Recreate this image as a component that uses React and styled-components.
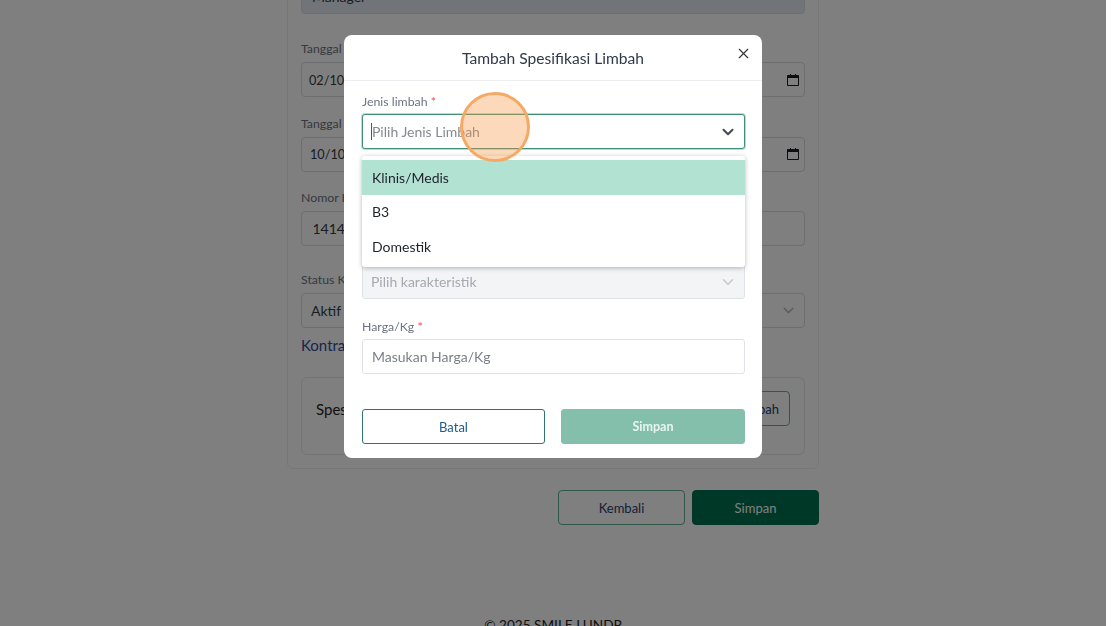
import styled, { createGlobalStyle } from "styled-components";
import { ChevronDown, X } from "lucide-react";

const GlobalStyle = createGlobalStyle`
  html, body {
    margin: 0;
    height: 626px;
    overflow: hidden;
    background: #ffffff;
    font-family: "Lato", "Liberation Sans", sans-serif;
  }
  * { box-sizing: border-box; }
`;

const Page = styled.div`
  height: 626px;
  overflow: hidden;
  display: flex;
  flex-direction: column;
  align-items: center;
  padding-right: 14px;
`;

const Panel = styled.div`
  width: 532px;
  margin-top: -22px;
  padding: 0 13px 13px;
  border: 1px solid #eceef1;
  border-radius: 6px;
  display: flex;
  flex-direction: column;
`;

const PageField = styled.div`
  display: flex;
  flex-direction: column;
  gap: 5px;
  margin-bottom: ${(p) => p.$mb}px;
`;

const PageLabel = styled.div`
  font-size: 12.3px;
  line-height: 16px;
  color: #6b7280;
`;

const PageInput = styled.div`
  height: 35px;
  border: 1px solid #d9dce1;
  border-radius: 4px;
  background: ${(p) => p.$bg || "#fff"};
  padding: 0 ${(p) => p.$pr || 10}px 0 ${(p) => p.$pl || 10}px;
  display: flex;
  align-items: center;
  justify-content: space-between;
  font-size: ${(p) => p.$fs || 14}px;
  color: #333a45;
`;

const ContractLink = styled.div`
  font-size: 15px;
  line-height: 18px;
  color: #2d4a9c;
  margin-bottom: 23px;
`;

const SpecCard = styled.div`
  height: 78px;
  border: 1px solid #e4e6ea;
  border-radius: 6px;
  padding: 13px 14px 0;
`;

const SpecRow = styled.div`
  display: flex;
  align-items: center;
  justify-content: space-between;
  font-size: 15px;
  color: #222;
`;

const AddButton = styled.div`
  height: 35px;
  padding: 0 10px;
  border: 1px solid #5faf94;
  border-radius: 4px;
  display: flex;
  align-items: center;
  font-size: 13px;
  color: #1e3a6e;
`;

const PageActions = styled.div`
  width: 532px;
  margin-top: 21px;
  display: flex;
  justify-content: flex-end;
  gap: 7px;
`;

const ActionButton = styled.div`
  width: 127px;
  height: 35px;
  border-radius: 4px;
  border: 1px solid ${(p) => (p.$solid ? "#00704e" : "#5faf94")};
  background: ${(p) => (p.$solid ? "#00704e" : "transparent")};
  color: ${(p) => (p.$solid ? "#ffffff" : "#1e3f70")};
  font-size: 13px;
  display: flex;
  align-items: center;
  justify-content: center;
`;

const Footer = styled.div`
  margin-top: auto;
  height: 9px;
  overflow: hidden;
  font-size: 13.6px;
  line-height: 17px;
  color: #222;
`;

const Overlay = styled.div`
  position: fixed;
  top: 0;
  bottom: 0;
  left: 0;
  right: 14px;
  background: rgba(0, 0, 0, 0.5);
`;

const Modal = styled.div`
  position: fixed;
  left: 344px;
  top: 35px;
  width: 418px;
  background: #fff;
  border-radius: 8px;
`;

const ModalHeader = styled.div`
  height: 46px;
  border-bottom: 1px solid #eceef1;
  display: flex;
  align-items: center;
  justify-content: center;
  position: relative;
  font-size: 15.6px;
  color: #2f3a4a;
`;

const CloseButton = styled.div`
  position: absolute;
  top: 10px;
  right: 10px;
  display: flex;
  color: #333;
`;

const ModalBody = styled.div`
  padding: 13px 17px 14px 18px;
  position: relative;
  display: flex;
  flex-direction: column;
`;

const Field = styled.div`
  display: flex;
  flex-direction: column;
  gap: 4px;
  margin-bottom: ${(p) => p.$mb}px;
`;

const Label = styled.div`
  font-size: 12.3px;
  line-height: 16px;
  color: #6b7280;
`;

const Required = styled.span`
  color: #ef4444;
`;

const Select = styled.div`
  height: 35px;
  padding: 0 7px 0 8px;
  border-radius: 3px;
  border: 1px solid ${(p) => (p.$focused ? "#3f8f75" : "#dfe3e8")};
  box-shadow: ${(p) => (p.$focused ? "0 0 0 1px #b9dccf" : "none")};
  background: ${(p) => (p.$disabled ? "#f3f4f6" : "#fff")};
  color: ${(p) => (p.$disabled ? "#a4a9b2" : "#85898f")};
  font-size: 14px;
  display: flex;
  align-items: center;
  justify-content: space-between;
`;

const Caret = styled.span`
  width: 1px;
  height: 17px;
  background: #555;
`;

const SelectText = styled.span`
  display: flex;
  align-items: center;
`;

const ArrowIcon = styled.span`
  display: flex;
  color: ${(p) => (p.$disabled ? "#c4c8ce" : "#444c58")};
`;

const TextInput = styled.div`
  height: 35px;
  padding: 0 9px;
  border: 1px solid #dfe3e8;
  border-radius: 3px;
  color: #7b8088;
  font-size: 14px;
  display: flex;
  align-items: center;
`;

const Menu = styled.div`
  position: absolute;
  left: 18px;
  right: 17px;
  top: 75px;
  height: 111px;
  padding-top: 4px;
  background: #fff;
  border-radius: 3px;
  box-shadow: 0 1px 5px rgba(0, 0, 0, 0.28);
  z-index: 2;
`;

const MenuItem = styled.div`
  height: 34.5px;
  padding: 0 10px;
  display: flex;
  align-items: center;
  background: ${(p) => (p.$active ? "#b2e2d2" : "transparent")};
  color: #1f2328;
  font-size: 14px;
`;

const ModalActions = styled.div`
  display: grid;
  grid-template-columns: 183px 184px;
  justify-content: space-between;
`;

const ModalButton = styled.div`
  height: 35px;
  border-radius: 3px;
  border: 1px solid ${(p) => (p.$solid ? "#83bfab" : "#2f7470")};
  background: ${(p) => (p.$solid ? "#83bfab" : "#fff")};
  color: ${(p) => (p.$solid ? "#e8f5f0" : "#1f5a8a")};
  font-size: ${(p) => (p.$solid ? 12.5 : 13)}px;
  font-weight: ${(p) => (p.$solid ? 700 : 400)};
  display: flex;
  align-items: center;
  justify-content: center;
`;

const ClickMarker = styled.div`
  position: fixed;
  left: 460px;
  top: 92px;
  width: 70px;
  height: 70px;
  border-radius: 50%;
  border: 3px solid #f5a964;
  background: rgba(250, 150, 70, 0.36);
  z-index: 3;
`;

// native date input picker glyph
const CalendarGlyph = () => (
  <svg width="12" height="12" viewBox="0 0 12 12">
    <path d="M0.5 1.5h11v10h-11z" fill="none" stroke="#1a1d22" />
    <path d="M0.5 1.5h11v2.5h-11z" fill="#1a1d22" />
    <path d="M3 0h1v2H3zM8 0h1v2H8z" fill="#1a1d22" />
  </svg>
);

const App = () => {
  return (
    <>
      <GlobalStyle />
      <Page>
        <Panel>
          <PageField $mb={27}>
            <PageInput $bg="#e2e8f0">Manager</PageInput>
          </PageField>
          <PageField $mb={18.5}>
            <PageLabel>Tanggal Mulai</PageLabel>
            <PageInput $pl={7} $pr={5} $fs={12.7}>
              02/10/2025
              <CalendarGlyph />
            </PageInput>
          </PageField>
          <PageField $mb={18.5}>
            <PageLabel>Tanggal Selesai</PageLabel>
            <PageInput $pl={8} $pr={5} $fs={12.7}>
              10/10/2025
              <CalendarGlyph />
            </PageInput>
          </PageField>
          <PageField $mb={26}>
            <PageLabel>Nomor Kontrak</PageLabel>
            <PageInput $pl={10.5}>1414</PageInput>
          </PageField>
          <PageField $mb={8}>
            <PageLabel>Status Kontrak</PageLabel>
            <PageInput $pl={9} $pr={7.5}>
              Aktif
              <ChevronDown size={17} color="#b8bcc2" />
            </PageInput>
          </PageField>
          <ContractLink>Kontrak.pdf</ContractLink>
          <SpecCard>
            <SpecRow>
              Spesifikasi Limbah
              <AddButton>Tambah</AddButton>
            </SpecRow>
          </SpecCard>
        </Panel>
        <PageActions>
          <ActionButton>Kembali</ActionButton>
          <ActionButton $solid>Simpan</ActionButton>
        </PageActions>
        <Footer>© 2025 SMILE LUNDP</Footer>
      </Page>
      <Overlay />
      <Modal>
        <ModalHeader>
          Tambah Spesifikasi Limbah
          <CloseButton>
            <X size={17} strokeWidth={1.6} />
          </CloseButton>
        </ModalHeader>
        <ModalBody>
          <Field $mb={95}>
            <Label>
              Jenis limbah <Required>*</Required>
            </Label>
            <Select $focused>
              <SelectText>
                <Caret />
                Pilih Jenis Limbah
              </SelectText>
              <ArrowIcon>
                <ChevronDown size={18} strokeWidth={2.8} />
              </ArrowIcon>
            </Select>
          </Field>
          <Field $mb={20}>
            <Label>Karakteristik</Label>
            <Select $disabled>
              Pilih karakteristik
              <ArrowIcon $disabled>
                <ChevronDown size={18} strokeWidth={2} />
              </ArrowIcon>
            </Select>
          </Field>
          <Field $mb={35}>
            <Label>
              Harga/Kg <Required>*</Required>
            </Label>
            <TextInput>Masukan Harga/Kg</TextInput>
          </Field>
          <ModalActions>
            <ModalButton>Batal</ModalButton>
            <ModalButton $solid>Simpan</ModalButton>
          </ModalActions>
          <Menu>
            <MenuItem $active>Klinis/Medis</MenuItem>
            <MenuItem>B3</MenuItem>
            <MenuItem>Domestik</MenuItem>
          </Menu>
        </ModalBody>
      </Modal>
      <ClickMarker />
    </>
  );
};

export default App;
